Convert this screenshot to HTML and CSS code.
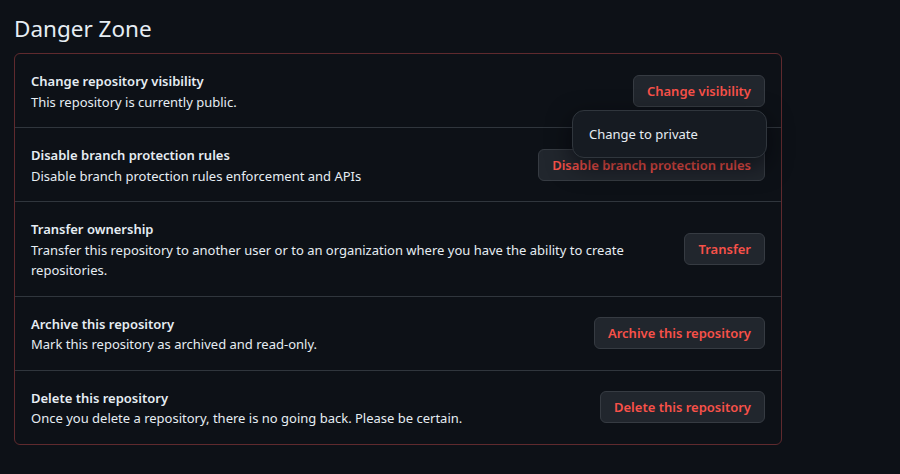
FILE: index.html
```html
<!DOCTYPE html>
<html lang="en">
<head>
<meta charset="utf-8">
<title>Danger Zone</title>
<link rel="stylesheet" href="styles.css">
</head>
<body>
<main class="page">
  <h2 class="heading">Danger Zone</h2>
  <div class="danger-box">
    <div class="row">
      <div class="info">
        <div class="title">Change repository visibility</div>
        <div class="desc">This repository is currently public.</div>
      </div>
      <div class="action">
        <button class="btn">Change visibility</button>
        <div class="menu">Change to private</div>
      </div>
    </div>
    <div class="row">
      <div class="info">
        <div class="title">Disable branch protection rules</div>
        <div class="desc">Disable branch protection rules enforcement and APIs</div>
      </div>
      <div class="action">
        <button class="btn">Disable branch protection rules</button>
      </div>
    </div>
    <div class="row">
      <div class="info">
        <div class="title">Transfer ownership</div>
        <div class="desc">Transfer this repository to another user or to an organization where you have the ability to create repositories.</div>
      </div>
      <div class="action">
        <button class="btn">Transfer</button>
      </div>
    </div>
    <div class="row">
      <div class="info">
        <div class="title">Archive this repository</div>
        <div class="desc">Mark this repository as archived and read-only.</div>
      </div>
      <div class="action">
        <button class="btn">Archive this repository</button>
      </div>
    </div>
    <div class="row">
      <div class="info">
        <div class="title">Delete this repository</div>
        <div class="desc">Once you delete a repository, there is no going back. Please be certain.</div>
      </div>
      <div class="action">
        <button class="btn">Delete this repository</button>
      </div>
    </div>
  </div>
</main>
</body>
</html>
```
FILE: styles.css
```css
html, body {
  margin: 0;
  padding: 0;
  background: #0d1117;
}
body {
  font-family: "Noto Sans", "Open Sans", sans-serif;
  color: #e6edf3;
  font-size: 13px;
  line-height: 20.5px;
}
.page {
  padding: 14px 118px 0 14px;
}
.heading {
  margin: 0 0 9px 0;
  font-size: 22.5px;
  line-height: 30px;
  font-weight: 400;
  color: #e6edf3;
}
.danger-box {
  border: 1px solid #5f2a2e;
  border-radius: 6px;
}
.row {
  display: flex;
  align-items: center;
  gap: 16px;
  padding: 17px 16px 15px;
  border-top: 1px solid #30363d;
}
.row:first-child {
  border-top: none;
}
.info {
  flex: 1;
  min-width: 0;
}
.title {
  font-weight: 600;
}
.action {
  position: relative;
  flex-shrink: 0;
  margin-top: -2px;
}
.btn {
  font-family: inherit;
  font-size: 13px;
  font-weight: 600;
  line-height: 20px;
  color: #f85149;
  background: #21262d;
  border: 1px solid #363b42;
  border-radius: 6px;
  padding: 5px 13px;
  height: 32px;
  white-space: nowrap;
}
.menu {
  position: absolute;
  right: -2px;
  top: 35px;
  width: 195px;
  box-sizing: border-box;
  padding: 13px 16px;
  background: #161b22;
  border: 1px solid #30363d;
  border-radius: 12px;
  box-shadow: 0 8px 24px rgba(1, 4, 9, 0.6);
  color: #e6edf3;
  font-size: 13px;
  line-height: 20px;
  z-index: 2;
}
```
